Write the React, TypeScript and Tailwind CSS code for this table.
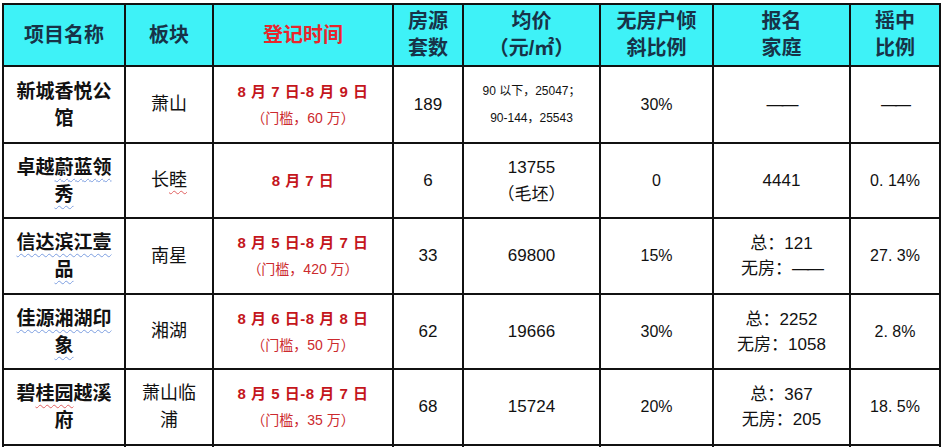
const cjk = "font-['Liberation_Sans','Noto_Sans_CJK_SC',sans-serif]"

const wavyBlue = "underline decoration-wavy decoration-[#7c9ee0] decoration-1 underline-offset-4"
const wavyRed = "underline decoration-wavy decoration-[#e06060] decoration-1 underline-offset-4"

type Row = {
  name: [React.ReactNode, React.ReactNode]
  area: React.ReactNode
  date: string
  gate?: string
  count: string
  price: React.ReactNode
  ratio: string
  family: React.ReactNode
  win: React.ReactNode
}

const dash = <span className="tracking-[-2px]">——</span>

const rows: Row[] = [
  {
    name: ["新城香悦公", "馆"],
    area: "萧山",
    date: "8 月 7 日-8 月 9 日",
    gate: "（门槛，60 万）",
    count: "189",
    price: (
      <div className="text-[12px] leading-[27px]">
        <div>90 以下，25047；</div>
        <div>90-144，25543</div>
      </div>
    ),
    ratio: "30%",
    family: dash,
    win: dash,
  },
  {
    name: [
      <>卓越<span className={wavyBlue}>蔚蓝领</span></>,
      <span className={wavyBlue}>秀</span>,
    ],
    area: <>长<span className={wavyRed}>睦</span></>,
    date: "8 月 7 日",
    count: "6",
    price: (
      <div className="leading-[27px]">
        <div>13755</div>
        <div>（毛坯）</div>
      </div>
    ),
    ratio: "0",
    family: "4441",
    win: "0. 14%",
  },
  {
    name: [
      <span className={wavyBlue}>信达滨江壹</span>,
      <span className={wavyBlue}>品</span>,
    ],
    area: "南星",
    date: "8 月 5 日-8 月 7 日",
    gate: "（门槛，420 万）",
    count: "33",
    price: "69800",
    ratio: "15%",
    family: (
      <div className="leading-[25px]">
        <div>总：121</div>
        <div>无房：{dash}</div>
      </div>
    ),
    win: "27. 3%",
  },
  {
    name: [
      <span className={wavyBlue}>佳源湘湖印</span>,
      <span className={wavyBlue}>象</span>,
    ],
    area: "湘湖",
    date: "8 月 6 日-8 月 8 日",
    gate: "（门槛，50 万）",
    count: "62",
    price: "19666",
    ratio: "30%",
    family: (
      <div className="leading-[25px]">
        <div>总：2252</div>
        <div>无房：1058</div>
      </div>
    ),
    win: "2. 8%",
  },
  {
    name: [
      <>碧<span className={wavyRed}>桂园</span>越溪</>,
      "府",
    ],
    area: (
      <div className="leading-[27px]">
        <div>萧山临</div>
        <div>浦</div>
      </div>
    ),
    date: "8 月 5 日-8 月 7 日",
    gate: "（门槛，35 万）",
    count: "68",
    price: "15724",
    ratio: "20%",
    family: (
      <div className="leading-[25px]">
        <div>总：367</div>
        <div>无房：205</div>
      </div>
    ),
    win: "18. 5%",
  },
]

const heights = ["h-[77px]", "h-[75px]", "h-[76px]", "h-[75px]", "h-[76px]"]

export default function App() {
  const th = "border-2 border-[#111] text-center align-middle font-bold text-[#173348] text-[20px] leading-[27px]"
  const td = "border-2 border-[#111] text-center align-middle text-[#111] text-[16px]"

  return (
    <div className={`w-[942px] h-[447px] overflow-hidden bg-white pt-[3px] pl-[2px] ${cjk}`}>
      <table className="table-fixed border-collapse w-[937px]">
        <colgroup>
          <col className="w-[122px]" />
          <col className="w-[88px]" />
          <col className="w-[180px]" />
          <col className="w-[70px]" />
          <col className="w-[137px]" />
          <col className="w-[113px]" />
          <col className="w-[137px]" />
          <col className="w-[90px]" />
        </colgroup>
        <thead>
          <tr className="h-[62px] bg-[#3ef2f7]">
            <th className={th}>项目名称</th>
            <th className={th}>板块</th>
            <th className={`${th} !text-[#e8262c]`}>登记时间</th>
            <th className={th}>
              房源
              <br />
              套数
            </th>
            <th className={`${th} text-[18px]`}>
              均价
              <br />
              （元/㎡）
            </th>
            <th className={th}>
              无房户倾
              <br />
              斜比例
            </th>
            <th className={th}>
              报名
              <br />
              家庭
            </th>
            <th className={th}>
              摇中
              <br />
              比例
            </th>
          </tr>
        </thead>
        <tbody>
          {rows.map((r, i) => (
            <tr key={i} className={heights[i]}>
              <td className={`${td} font-bold text-[19px] leading-[27px]`}>
                <div>{r.name[0]}</div>
                <div>{r.name[1]}</div>
              </td>
              <td className={`${td} text-[18px]`}>{r.area}</td>
              <td className={td}>
                <div className="leading-[26px]">
                  <div className="font-bold text-[15px] tracking-[0.5px] text-[#c4161c]">{r.date}</div>
                  {r.gate && <div className="text-[14px] text-[#cc2a2e]">{r.gate}</div>}
                </div>
              </td>
              <td className={`${td} text-[17px]`}>{r.count}</td>
              <td className={`${td} text-[17px]`}>{r.price}</td>
              <td className={td}>{r.ratio}</td>
              <td className={`${td} text-[17px]`}>{r.family}</td>
              <td className={td}>{r.win}</td>
            </tr>
          ))}
          <tr className="h-[20px]">
            {Array.from({ length: 8 }).map((_, i) => (
              <td key={i} className={td}></td>
            ))}
          </tr>
        </tbody>
      </table>
    </div>
  )
}
